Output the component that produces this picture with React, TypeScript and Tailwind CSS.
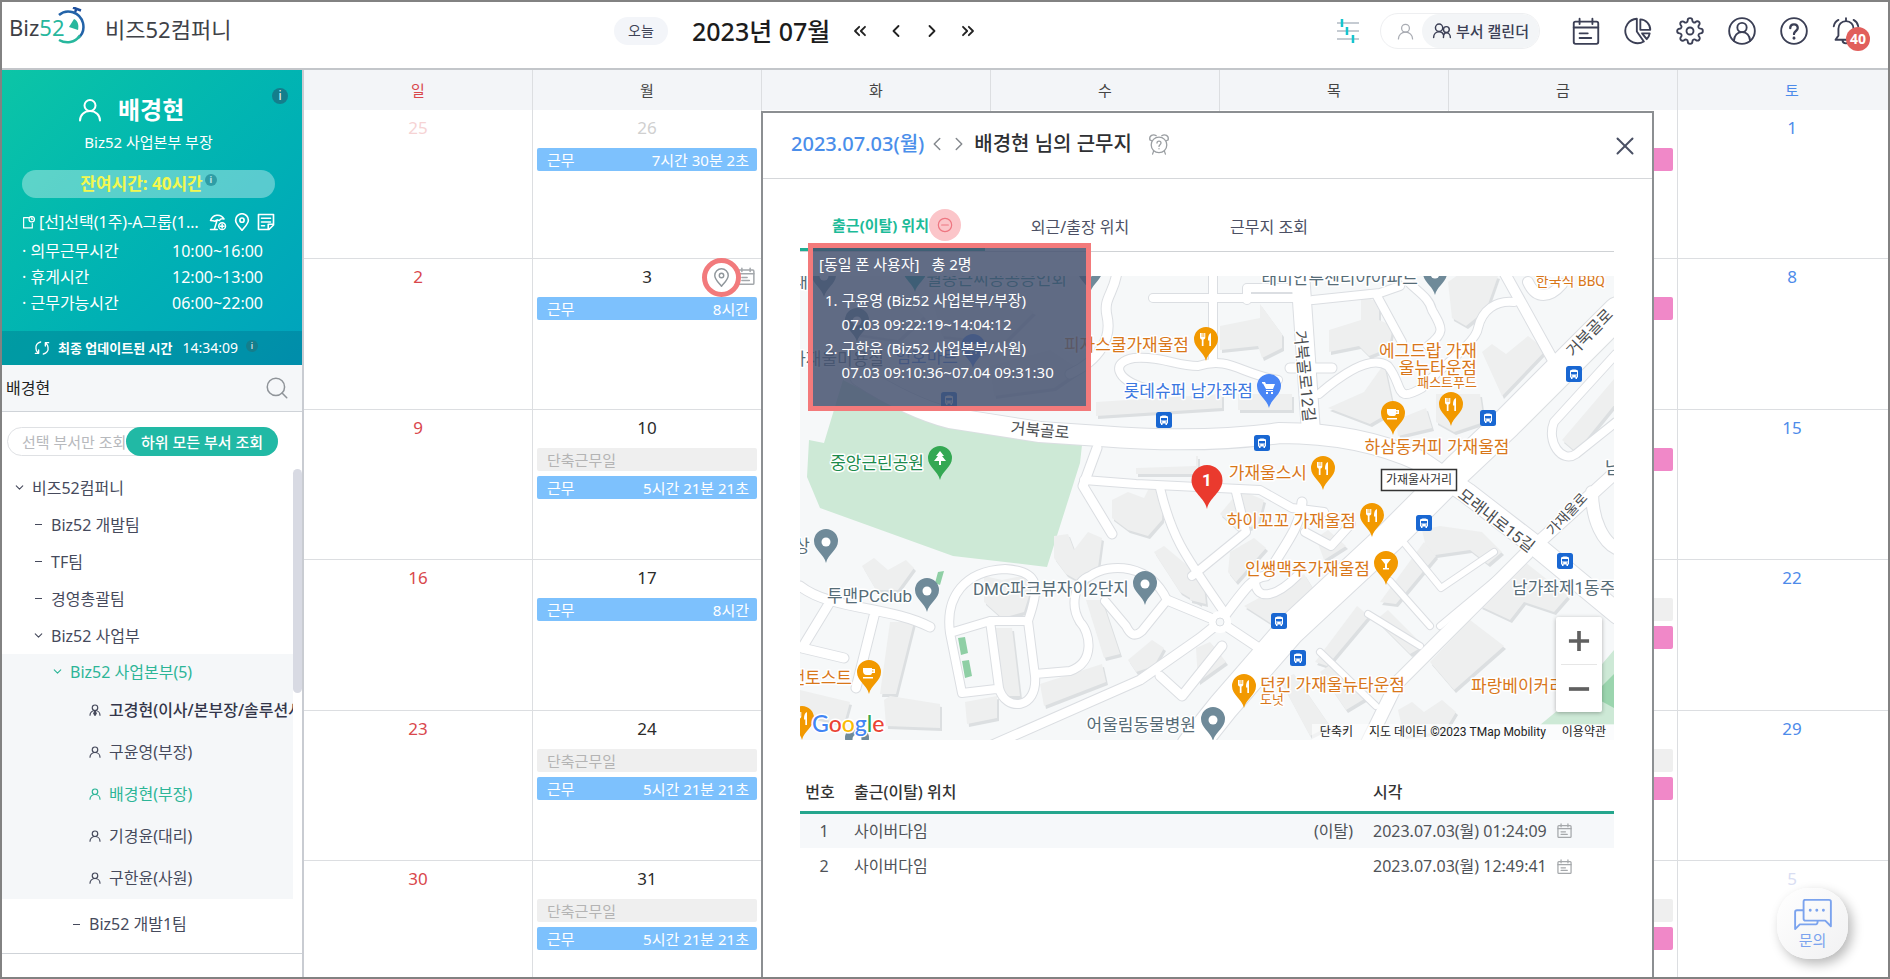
import { useState, type ReactNode } from "react";
import { FiSettings } from "react-icons/fi";
import { ChevronDown, ChevronLeft, ChevronRight, ChevronsLeft, ChevronsRight, Search, X } from "lucide-react";

type CalEvent = { label: string; value?: string; tone: "blue" | "gray" | "pink" };
type Day = { date?: number; faded?: boolean; events?: CalEvent[]; icons?: boolean };

const DAYS = ["일", "월", "화", "수", "목", "금", "토"];

const short: CalEvent = { label: "단축근무일", tone: "gray" };
const blank: CalEvent = { label: "", tone: "gray" };
const pink: CalEvent = { label: "", tone: "pink" };
const work = (value: string): CalEvent => ({ label: "근무", value, tone: "blue" });

function week(sun: Day, mon: Day, fri: Day, sat: Day): Day[] {
  return [sun, mon, {}, {}, {}, fri, sat];
}

const WEEKS: Day[][] = [
  week({ date: 25, faded: true }, { date: 26, faded: true, events: [work("7시간 30분 2초")] }, { events: [pink] }, { date: 1 }),
  week({ date: 2 }, { date: 3, icons: true, events: [work("8시간")] }, { events: [pink] }, { date: 8 }),
  week({ date: 9 }, { date: 10, events: [short, work("5시간 21분 21초")] }, { events: [pink] }, { date: 15 }),
  week({ date: 16 }, { date: 17, events: [work("8시간")] }, { events: [blank, pink] }, { date: 22 }),
  week({ date: 23 }, { date: 24, events: [short, work("5시간 21분 21초")] }, { events: [blank, pink] }, { date: 29 }),
  week({ date: 30 }, { date: 31, events: [short, work("5시간 21분 21초")] }, { events: [blank, pink] }, { date: 5, faded: true }),
];

const TONES = {
  blue: "bg-[#7dc1fd] text-white",
  gray: "bg-[#efefef] text-[#b4b4b4]",
  pink: "bg-[#f088c8] text-white",
};

function Icon({ className, children, box = 24, width = 1.6 }: { className: string; children: ReactNode; box?: number; width?: number }) {
  return (
    <svg viewBox={`0 0 ${box} ${box}`} className={className} fill="none" stroke="currentColor" strokeWidth={width} strokeLinecap="round" strokeLinejoin="round" aria-hidden="true">
      {children}
    </svg>
  );
}

function Person({ className, width = 2, lead = false }: { className: string; width?: number; lead?: boolean }) {
  return (
    <Icon className={className} width={width}>
      <circle cx="12" cy="7.5" r="5.5" />
      <path d="M2 22.500c0-5.500 4.300-9.500 10-9.500s10 4 10 9.500" />
      {lead ? <path d="M12 13l-2.500 6 2.500 4 2.500-4z" fill="currentColor" /> : null}
    </Icon>
  );
}

function CalendarIcon({ className, width = 1.8 }: { className: string; width?: number }) {
  return (
    <Icon className={className} width={width}>
      <rect x="1.500" y="4" width="21" height="19" rx="1.500" />
      <path d="M1.500 9h21M6.500 1.500V6M17.500 1.500V6M6.500 14h7M6.500 18h10" />
    </Icon>
  );
}

function PinIcon({ className, width = 1.8 }: { className: string; width?: number }) {
  return (
    <Icon className={className} width={width}>
      <path d="M12 23C8 18 3.500 14.500 3.500 9.500a8.500 8.500 0 0 1 17 0C20.500 14.500 16 18 12 23z" />
      <circle cx="12" cy="9.500" r="2.800" />
    </Icon>
  );
}

function Info({ className }: { className: string }) {
  return (
    <span className={`inline-flex shrink-0 items-center justify-center rounded-full bg-[#147e8c] text-white ${className}`}>i</span>
  );
}

function Logo() {
  return (
    <a href="#" aria-label="Biz52" className="relative flex h-10 w-[76px] items-center">
      <span className="text-[22px] leading-6 text-[#3d3f45]">
        Biz<span className="text-[#27b79d]">52</span>
      </span>
      <svg viewBox="0 0 30 40" className="absolute top-0 right-0 h-10 w-[30px]" fill="none" aria-hidden="true">
        <path d="M4 8C12 1 25 5 28 16c1.500 7-1 12-5 15" stroke="#2363a8" strokeWidth="2.500" />
        <path d="M25 28.500C20 36 11 37 4 33" stroke="#27b79d" strokeWidth="2.500" />
        <path d="M20 5l2-4M18 .500l8 3" stroke="#1d4f9c" strokeWidth="2.500" />
        <path d="M19 12c4 2 5 6 4 11l-9-3z" fill="#27b79d" />
      </svg>
    </a>
  );
}

function Header() {
  const iconBtn = "flex items-center justify-center text-[#3b3f55]";
  return (
    <header className="flex h-[68px] shrink-0 border-b-2 border-[#c3c6ca] pb-2">
      <div className="flex w-[612px] shrink-0 items-center pb-2 pl-[7px]">
        <Logo />
        <span className="mt-1 ml-5 text-[22px] leading-8 text-[#3f4248]">비즈52컴퍼니</span>
      </div>
      <div className="flex items-center">
        <button className="h-7 w-[54px] rounded-full bg-[#f3f5f9] text-[14px] leading-5 text-[#3f4356]">오늘</button>
        <h1 className="ml-6 text-[25px] leading-8 font-medium text-[#1c1c1c]">2023년 07월</h1>
        <div className="ml-5 flex items-center gap-4 text-[#222]">
          <button aria-label="이전 해"><ChevronsLeft size={20} strokeWidth={2.2} /></button>
          <button aria-label="이전 달"><ChevronLeft size={20} strokeWidth={2.2} /></button>
          <button aria-label="다음 달"><ChevronRight size={20} strokeWidth={2.2} /></button>
          <button aria-label="다음 해"><ChevronsRight size={20} strokeWidth={2.2} /></button>
        </div>
      </div>
      <div className="ml-auto flex items-center pr-7">
        <button aria-label="필터" className="mr-5">
          <svg viewBox="0 0 24 28" className="h-7 w-6" strokeWidth="2" fill="none" aria-hidden="true">
            <path d="M1 6h22M1 14h22M1 22h22" stroke="#c5cbd2" />
            <path d="M6 2v8M11 10v8M17 18v8" stroke="#16c4cf" strokeWidth="2.500" />
          </svg>
        </button>
        <div className="mr-8 flex h-9 w-40 items-center rounded-full border border-[#eeeff1]">
          <button aria-label="내 캘린더" className="flex w-[41px] justify-center pl-2 text-[#a9acb3]">
            <Person className="size-[17px]" width={1.8} />
          </button>
          <button className="flex h-full flex-1 items-center justify-center gap-1 rounded-full bg-[#f3f5f7] text-[15px] leading-5 font-medium text-[#3b3f55]">
            <svg viewBox="0 0 26 22" className="h-4 w-5" fill="none" stroke="currentColor" strokeWidth="2" strokeLinecap="round" aria-hidden="true">
              <circle cx="9" cy="6.500" r="5" />
              <path d="M1.500 20c0-4.500 3-8 7.500-8 3 0 5 1.500 6 4" />
              <circle cx="19" cy="9" r="4" />
              <path d="M15 20c0-3.500 1-6.500 4-6.500s5.500 3 5.500 6.500" />
            </svg>
            부서 캘린더
          </button>
        </div>
        <div className="flex items-center gap-6">
          <button aria-label="일정" className={iconBtn}><CalendarIcon className="size-7" width={1.6} /></button>
          <button aria-label="통계" className={iconBtn}>
            <Icon className="size-7">
              <path d="M11 1.500a10.500 10.500 0 1 0 6 19.500L11 12.500z" />
              <path d="M14 2v9h8.500A9 9 0 0 0 14 2z" />
              <path d="M15.500 14H22c-.3 2-1.200 3.700-2.500 5z" />
            </Icon>
          </button>
          <button aria-label="설정" className={iconBtn}><FiSettings size={28} strokeWidth={1.6} /></button>
          <button aria-label="내 정보" className={iconBtn}>
            <Icon className="size-7">
              <circle cx="12" cy="12" r="11" />
              <circle cx="12" cy="9" r="4" />
              <path d="M5 20.500c.5-4.500 3-7.500 7-7.500s6.500 3 7 7.500" />
            </Icon>
          </button>
          <button aria-label="도움말" className={iconBtn}>
            <Icon className="size-7">
              <circle cx="12" cy="12" r="11" />
              <path d="M8.800 9.500c0-4.300 6.400-4.300 6.400 0 0 2.300-3.200 2.700-3.200 5" strokeWidth="2" />
              <path d="M12 18v.2" strokeWidth="2.400" />
            </Icon>
          </button>
          <button aria-label="알림 40" className="relative text-[#3b3f55]">
            <Icon className="size-7">
              <path d="M12 1v2.500M12 3.500C8 3.500 5.500 6.500 5.500 10v6L3 19.500h18L18.500 16v-6c0-3.500-2.500-6.500-6.500-6.500zM9 20c0 3.500 6 3.500 6 0M1.500 8C2 5.500 3.500 3.500 5.500 2.500M22.500 8c-.5-2.500-2-4.500-4-5.500" />
            </Icon>
            <span className="absolute top-2.5 left-3.5 flex size-6 items-center justify-center rounded-full bg-[#e15f5c] text-[14px] leading-4 font-bold text-white">40</span>
          </button>
        </div>
      </div>
    </header>
  );
}

const HOURS = [
  ["의무근무시간", "10:00~16:00"],
  ["휴게시간", "12:00~13:00"],
  ["근무가능시간", "06:00~22:00"],
];

function Profile() {
  return (
    <section className="relative bg-linear-to-br from-[#0cc5a6] to-[#00a2bd] text-white">
      <Info className="absolute top-[18px] right-[14px] size-4 text-[12px] leading-4" />
      <div className="flex h-[261px] flex-col pt-6 pr-[27px] pl-5">
        <div className="flex items-center gap-4 pl-14">
          <Person className="size-6" width={2} />
          <strong className="text-[24px] leading-8 font-bold">배경현</strong>
        </div>
        <p className="mt-1 text-center text-[15px] leading-6">Biz52 사업본부 부장</p>
        <div className="mt-4 flex h-7 shrink-0 items-center justify-center rounded-full bg-white/35 text-[17px] leading-6 font-bold text-[#f3f84e]">
          잔여시간: 40시간
          <Info className="mb-2 ml-0.5 size-3 text-[9px] leading-3 opacity-60" />
        </div>
        <div className="mt-3 flex items-center">
          <Icon className="size-[13px] shrink-0" width={2.2}>
            <path d="M12 3H3v19h16v-8" />
            <circle cx="18" cy="6" r="5" />
            <path d="M18 3.500V6h2" />
          </Icon>
          <span className="ml-1 min-w-0 flex-1 text-[16px] leading-6 whitespace-nowrap">[선]선택(1주)-A그룹(1…</span>
          <Icon className="size-[18px] shrink-0" width={2}>
            <path d="M2 10C5 2 15 0 20 8c-3-1-5 0-6 2-2-1-4-1-6 1-2-1-4-1-6-1zM11 9L7 22H2h9" />
            <circle cx="17.500" cy="17.500" r="4.500" />
            <path d="M17.500 15v5M15 17.500h5" />
          </Icon>
          <PinIcon className="ml-1.5 size-[18px] shrink-0" width={2.2} />
          <Icon className="ml-1.5 size-[18px] shrink-0" width={2.2}>
            <path d="M2 2h20v14l-6 6H2zM22 15h-7v7M6 7h12M6 12h12M6 17h4" />
          </Icon>
        </div>
        <dl className="mt-1 text-[16px]">
          {HOURS.map(([label, value]) => (
            <div key={label} className="flex h-[26px] items-center justify-between pr-3">
              <dt className="leading-6">· {label}</dt>
              <dd className="leading-6">{value}</dd>
            </div>
          ))}
        </dl>
      </div>
      <div className="flex h-[34px] items-center bg-[#006080]/30 pl-8 text-[14px] leading-5">
        <Icon className="size-4" width={2}>
          <path d="M10 3C5 4 2 8 3 13c0 2 1 4 3 6M2 20h5v-5M14 21c5-1 8-5 7-10 0-2-1-4-3-6M22 4h-5v5" />
        </Icon>
        <strong className="ml-2 text-[13px] font-bold">최종 업데이트된 시간</strong>
        <span className="ml-2.5">14:34:09</span>
        <Info className="mb-1 ml-2 size-3 text-[9px] leading-3" />
      </div>
    </section>
  );
}

type Leaf = { name: string; open?: boolean; pad: string };

const TREE: Leaf[] = [
  { name: "비즈52컴퍼니", open: true, pad: "pl-[10px]" },
  { name: "Biz52 개발팀", pad: "pl-[29px]" },
  { name: "TF팀", pad: "pl-[29px]" },
  { name: "경영총괄팀", pad: "pl-[29px]" },
  { name: "Biz52 사업부", open: true, pad: "pl-[29px]" },
];

const MEMBERS = ["고경현(이사/본부장/솔루션사업)", "구윤영(부장)", "배경현(부장)", "기경윤(대리)", "구한윤(사원)"];

function TreeRow({ leaf, className }: { leaf: Leaf; className: string }) {
  return (
    <li className={`flex items-center gap-1.5 ${leaf.pad} ${className}`}>
      <span className="flex w-[14px] shrink-0 justify-center">
        {leaf.open ? <ChevronDown size={13} strokeWidth={2} /> : <span className="h-px w-[7px] bg-current" />}
      </span>
      <button className="text-[16px] leading-6">{leaf.name}</button>
    </li>
  );
}

function Sidebar() {
  const [query, setQuery] = useState("배경현");
  return (
    <aside className="flex w-[302px] shrink-0 flex-col overflow-hidden border-r-2 border-[#c9ccd2]">
      <Profile />
      <div className="flex h-[47px] shrink-0 items-center border-b border-[#cfd3d8] bg-[#f5f7f9] pr-3 pl-1">
        <input
          aria-label="이름 검색"
          value={query}
          onChange={(e) => setQuery(e.target.value)}
          className="min-w-0 flex-1 bg-transparent text-[16px] leading-6 text-[#222] outline-none"
        />
        <button aria-label="검색" className="text-[#8f9499]"><Search size={26} strokeWidth={1.4} /></button>
      </div>
      <div className="mt-[15px] ml-[5px] flex h-[29px] w-[271px] shrink-0 rounded-full border border-[#dfe1e4]">
        <button className="w-[118px] pl-3.5 text-left text-[15px] leading-5 whitespace-nowrap text-[#b7b9bd]">선택 부서만 조회</button>
        <button className="-my-px -mr-px flex-1 rounded-full bg-[#21b9a5] text-[15px] leading-5 font-medium text-white">하위 모든 부서 조회</button>
      </div>
      <div className="mt-[13px] flex border-b border-[#cfd3d8] pb-1">
        <ul className="min-w-0 flex-1 text-[#464a5c]">
          {TREE.map((leaf) => (
            <TreeRow key={leaf.name} leaf={leaf} className="h-[37px]" />
          ))}
          <li className="bg-[#f5f7f9]">
            <ul>
              <TreeRow leaf={{ name: "Biz52 사업본부(5)", open: true, pad: "pl-12" }} className="h-[35px] text-[#2cb597]" />
              {MEMBERS.map((m, i) => (
                <li key={m} className={`flex h-[42px] items-center gap-2 overflow-hidden pl-[87px] ${i === 2 ? "text-[#2cb597]" : ""}`}>
                  <Person className="size-3 shrink-0" width={2.4} lead={i === 0} />
                  <button className={`text-[16px] leading-6 whitespace-nowrap ${i === 0 ? "font-medium text-[#33364a]" : ""}`}>{m}</button>
                </li>
              ))}
            </ul>
          </li>
          <TreeRow leaf={{ name: "Biz52 개발1팀", pad: "pl-[67px]" }} className="h-[50px]" />
        </ul>
        <div className="h-[224px] w-[9px] rounded-full bg-[#d8dae3]" />
      </div>
    </aside>
  );
}

function DayCell({ day, col }: { day: Day; col: number }) {
  const color =
    col === 0
      ? day.faded ? "text-[#f6d3d4]" : "text-[#d9474c]"
      : col === 6
        ? day.faded ? "text-[#d9def3]" : "text-[#4d8bea]"
        : day.faded ? "text-[#d0d0d0]" : "text-[#2b2b2b]";
  return (
    <div className="relative flex flex-col gap-[5px] border-r border-b border-[#dcdee1] pr-1 pl-1">
      <div className={`h-[33px] pt-1.5 text-center text-[17px] leading-6 ${color}`}>{day.date}</div>
      {day.events?.map((ev, i) => (
        <div key={i} className={`flex h-[23px] items-center justify-between rounded-xs pr-2 pl-2.5 text-[15px] leading-5 ${TONES[ev.tone]}`}>
          <span>{ev.label}</span>
          <span>{ev.value}</span>
        </div>
      ))}
      {day.icons ? (
        <>
          <button aria-label="일정 보기" className="absolute top-2 right-1.5 text-[#a3a7ab]"><CalendarIcon className="size-[18px]" width={2} /></button>
          <button aria-label="근무지 보기" className="absolute -top-px right-5 flex size-[39px] items-center justify-center rounded-full border-[5px] border-[#f27a7c] text-[#8f969b]">
            <PinIcon className="size-[19px]" width={1.8} />
          </button>
        </>
      ) : null}
    </div>
  );
}

function Calendar() {
  return (
    <div className="-mr-[19px]">
      <div className="grid h-10 grid-cols-7 bg-[#f3f5f8]">
        {DAYS.map((d, i) => (
          <div key={d} className={`flex items-center justify-center border-r border-[#dcdee1] text-[15px] leading-6 ${i === 0 ? "text-[#d9474c]" : i === 6 ? "text-[#4d8bea]" : "text-[#444]"}`}>
            {d}
          </div>
        ))}
      </div>
      <div className="grid grid-cols-7 grid-rows-[149px_151px_150px_151px_150px_150px]">
        {WEEKS.map((w, r) => w.map((day, c) => <DayCell key={`${r}-${c}`} day={day} col={c} />))}
      </div>
    </div>
  );
}

// [path, width]
const ROADS: [string, number][] = [
  ["M317 -4C314 18 303 22 307 40 312 62 300 84 270 98", 9],
  ["M353 22H493M413 -4V84M513 24L580 17 600 10M447 24V12h46", 8],
  ["M345 112C316 104 310 86 334 82C362 80 376 90 398 90C430 80 440 98 478 104", 8],
  ["M577 20L602 66M600 -4C612 14 628 18 632 34C642 52 646 56 628 70", 8],
  ["M519 118C540 100 570 78 588 90C604 110 594 128 622 112C634 96 676 68 678 52 682 34 696 24 714 26", 8],
  ["M703 -6L754 86M728 6c8 18 22 16 34 2", 10],
  ["M490 92h42", 9],
  ["M816 78L754 146C746 166 762 188 776 178L816 146", 8],
  ["M297 172L283 210 312 258", 9],
  ["M284 204L336 208 460 214 492 232 524 236", 8],
  ["M360 212C372 262 384 278 424 336M392 300L446 256 436 216", 8],
  ["M0 310C30 334 90 330 130 351M30 326L2 372 44 382M75 336L56 412", 9],
  ["M150 357C145 320 165 295 205 293C240 295 240 310 228 345H190L150 357 162 417 196 413M190 345L199 412C205 436 238 434 235 400L228 345M235 398L270 395C296 386 290 356 280 346C270 330 274 306 290 300 310 286 350 288 367 324L342 355C334 362 330 358 326 350L305 325", 8],
  ["M367 324L420 346M190 470L340 404 400 362 420 346 462 374M420 346C440 320 452 300 466 300 490 262 500 250 502 226M360 400l22 20 40-50", 9],
  ["M455 306c2 20 22 14 42-6M505 256l26 14 20-22", 8],
  ["M605 268L641 312 694 276M590 305L630 350M568 338L620 370M520 376L576 430M640 350L700 300", 6],
  ["M727 277L640 364 597 407 566 470", 13],
  ["M727 277L816 196M792 216c0 30 12 50 24 56", 12],
  ["M500 -4L511 156", 18],
  ["M60 100Q110 132 150 142L240 156 300 160Q400 168 480 157Q560 157 620 185L667 217 737 271 818 338", 20],
  ["M818 36L707 147 657 194 590 261 490 354 423 431 392 470", 30],
];

const BUILDINGS = [
  "M336 192l60-2v-10h-60zM336 180h62v18h-62z",
  "M296 140l126-8v-14l-126 8zM438 118h54v16h-54z",
  "M420 50l40-8V28l22 30v14l-20 10-4-12-38 4z",
  "M529 54l32-10V20l18 6v18l14 6-4 22-20 8-10-10-30 6z",
  "M648 6l20-14 30 8-12 34-20 16-14-8z",
  "M528 132l36-16 20-28 10 46-24 14zM596 144l30-12 6 20-34 8z",
  "M636 118h44l4 28-30 10-18-10z",
  "M682 76l10-8 14 10 22-18 18 14-44 46z",
  "M762 164l58-68v26l-44 54z",
  "M312 224l16-8 16 6 8-16 12 4-2 34-14 16-20-6-16-12z",
  "M254 260l14-2 6 16 14-18 14 6-4 30-14 16-18-10-12-16z",
  "M354 276l10-6 36 30v28l-20-12z",
  "M62 290l12-8 14 12 18-10 8 8-16 22h-22z",
  "M90 346h24l-18 72h-16z",
  "M192 352h20l8 68h-22z",
  "M286 324h16l18 54-16 4z",
  "M184 300l18 4 20-4 10 10-8 26-22 6-18-16z",
  "M328 384l24-20 12 8-10 18-18 6z",
  "M240 408l62-20 4 18-62 24z",
  "M165 426l32-6v22l-30 6z",
  "M84 424l6-4 50 8v24l-54-2z",
  "M0 414l50 12-6 22-44-10z",
  "M390 300l14 10 2 18-16-4z",
  "M420 238l20-24 24 10-6 24-18 8z",
  "M430 276l24-14 12 10-30 34-8-10z",
  "M444 330l60-32 10 16-42 34z",
  "M516 262l12-8 18 16-22 14z",
  "M622 254l18-4 42 6 20 20-14 12-18-14-42 6z",
  "M515 386l42-56 12 10-42 50z",
  "M580 326l44-60 12 14-40 48z",
  "M576 344l12-10 36 36-14 8z",
  "M520 396l14-10 32 36-20 12z",
  "M630 386l40-42 34 26-50 44z",
  "M680 330l40-48 48 38-14 16-30-10-14 18z",
  "M598 434l14-8 12 10 18-12 14 12-12 20-40 4z",
  "M396 372l14-6 16 20-28 20z",
  "M480 404l14-6 36 52-20 10z",
  "M60 30l44-10 20 20-26 24-40-6z",
  "M134 30l60-14 40 20-30 30-62-6z",
  "M190 90l60-16 30 20-26 18-60 8z",
];

const PINS: [number, number, string, string][] = [
  [24, 21, "#6f8a99", "dot"], [57, 66, "#6f8a99", "dot"], [115, 16, "#17a39a", "dot"], [290, 17, "#6f8a99", "dot"],
  [173, 92, "#4a86f5", "cart"], [140, 204, "#34a853", "tree"], [26, 287, "#6f8a99", "dot"], [127, 336, "#6f8a99", "dot"],
  [345, 329, "#6f8a99", "dot"], [413, 465, "#6f8a99", "dot"], [635, 19, "#6f8a99", "dot"], [57, 484, "#6f8a99", "dot"],
  [69, 418, "#f29900", "cup"], [2, 464, "#f29900", "fork"], [406, 85, "#f29900", "fork"], [469, 132, "#4a86f5", "cart"],
  [651, 150, "#f29900", "fork"], [593, 159, "#f29900", "cup"], [523, 214, "#f29900", "fork"], [572, 261, "#f29900", "fork"],
  [586, 309, "#f29900", "glass"], [444, 432, "#f29900", "fork"],
];

const BUSES = [[149, 124], [364, 144], [462, 167], [774, 98], [688, 142], [624, 247], [765, 285], [479, 345], [498, 382]];

function Glyph({ kind }: { kind: string }) {
  switch (kind) {
    case "tree":
      return <path d="M0-8l4 5H2l4 5H1v4h-2V2h-5l4-5h-2z" fill="#fff" />;
    case "cup":
      return <path d="M-6-5h9v1h3v4H3c-.5 2-1.500 2-3 2h-2c-3 0-4-2-4-4zM3-2.500v1h1.500v-1zM-6 4H4v1.500H-6z" fill="#fff" />;
    case "cart":
      return <path d="M-7-5h3l1 2h9l-2 5h-7l-3-5.500h-1zM-3 3h7v1h-7zM-3 5h2v2h-2zM2 5h2v2H2z" fill="#fff" />;
    case "glass":
      return <path d="M-5-5H5L1 0v4h2v1.500h-6V4h2V0z" fill="#fff" />;
    case "fork":
      return <path d="M-6-7v4.500c0 1.500 1.300 2 1.800 2V6h1.700V-.500c.5 0 1.800-.5 1.800-2V-7h-1.100v4h-.7v-4h-1.100v4h-.7v-4zM5-7C2.500-6 2-3.500 2 .500h1.300V6H5V-7z" fill="#fff" />;
    default:
      return <circle r="4.500" fill="#fff" />;
  }
}

const ORANGE = "#d8771a";
const SLATE = "#566c77";
const DARK = "#4a4d50";

type Label = { x: number; y: number; t: string; c: string; size?: number; anchor?: "start" | "middle" | "end"; rotate?: number };

const LABELS: Label[] = [
  { x: 267, y: 9, t: "월종근씨공공증인회", c: "#17857e", anchor: "end" },
  { x: 0, y: 12, t: "재", c: SLATE, anchor: "middle" },
  { x: 84, y: 89, t: "가재울미용실", c: SLATE, anchor: "end" },
  { x: 158, y: 87, t: "엄호마트", c: "#3c78e0", anchor: "end" },
  { x: 124, y: 193, t: "중앙근린공원", c: "#1b8a4b", anchor: "end" },
  { x: 10, y: 276, t: "상", c: SLATE, anchor: "end" },
  { x: 112, y: 326, t: "투맨PCclub", c: SLATE, anchor: "end" },
  { x: 329, y: 319, t: "DMC파크뷰자이2단지", c: SLATE, anchor: "end" },
  { x: 52, y: 408, t: "맨토스트", c: ORANGE, anchor: "end" },
  { x: 396, y: 455, t: "어울림동물병원", c: SLATE, anchor: "end" },
  { x: 389, y: 75, t: "피자스쿨가재울점", c: ORANGE, anchor: "end" },
  { x: 453, y: 121, t: "롯데슈퍼 남가좌점", c: "#3c78e0", anchor: "end" },
  { x: 507, y: 203, t: "가재울스시", c: ORANGE, anchor: "end" },
  { x: 556, y: 251, t: "하이꼬꼬 가재울점", c: ORANGE, anchor: "end" },
  { x: 570, y: 299, t: "인쌩맥주가재울점", c: ORANGE, anchor: "end" },
  { x: 460, y: 415, t: "던킨 가재울뉴타운점", c: ORANGE },
  { x: 460, y: 428, t: "도넛", c: ORANGE, size: 13 },
  { x: 671, y: 416, t: "파랑베이커리", c: ORANGE },
  { x: 712, y: 318, t: "남가좌제1동주", c: SLATE },
  { x: 677, y: 81, t: "에그드랍 가재", c: ORANGE, anchor: "end" },
  { x: 677, y: 98, t: "울뉴타운점", c: ORANGE, anchor: "end" },
  { x: 677, y: 111, t: "패스트푸드", c: ORANGE, size: 13, anchor: "end" },
  { x: 637, y: 177, t: "하삼동커피 가재울점", c: ORANGE, anchor: "middle" },
  { x: 618, y: 8, t: "래미안루센티아아파트", c: SLATE, anchor: "end" },
  { x: 805, y: 10, t: "한국식 BBQ", c: ORANGE, size: 14, anchor: "end" },
  { x: 805, y: 198, t: "남", c: SLATE },
  { x: 240, y: 160, t: "거북골로", c: DARK, anchor: "middle", rotate: 5 },
  { x: 790, y: 62, t: "거북골로", c: DARK, anchor: "middle", rotate: -46 },
  { x: 504, y: 105, t: "거북골로12길", c: DARK, anchor: "middle", rotate: 84 },
  { x: 696, y: 250, t: "모래내로15길", c: DARK, anchor: "middle", rotate: 38 },
  { x: 767, y: 243, t: "가재울로", c: DARK, size: 14, anchor: "middle", rotate: -47 },
];

const GOOGLE = [["G", "#4285f4"], ["o", "#ea4335"], ["o", "#fbbc05"], ["g", "#4285f4"], ["l", "#34a853"], ["e", "#ea4335"]];

function MapView() {
  return (
    <div className="relative mt-6 h-[464px] overflow-hidden font-['Roboto','Noto_Sans_CJK_KR',sans-serif]">
      <svg viewBox="0 0 814 464" preserveAspectRatio="xMidYMid slice" className="h-full w-full" role="img" aria-label="지도">
        <rect width="814" height="464" fill="#f6f8f9" />
        <path d="M43 104L102 134 120 141 150 152 183 157 282 169 280 187 247 291 153 280 20 232 7 201 9 164 24 167z" fill="#cde9d6" />
        <path d="M740 449L775 420 814 374V449z" fill="#cde9d6" />
        <path d="M792 420l22-22v34z" fill="#9bd5ae" />
        {BUILDINGS.map((d) => (
          <g key={d}>
            <path d={d} fill="#dcdfe1" transform="translate(2 3)" />
            <path d={d} fill="#eeefef" />
          </g>
        ))}
        <g fill="none" strokeLinejoin="round" strokeLinecap="round">
          {ROADS.map(([d, w]) => (
            <path key={d} d={d} stroke="#dbdee2" strokeWidth={w + 2} />
          ))}
          {ROADS.map(([d, w]) => (
            <path key={d} d={d} stroke="#fff" strokeWidth={w} />
          ))}
        </g>
        <circle cx="420" cy="346" r="11" fill="#fff" />
        <circle cx="420" cy="346" r="4" fill="#f6f8f9" stroke="#dbdee2" />
        <path d="M158 362l7-1 3 16-7 2zM162 385l7-1 3 16-7 2zM138 296l6-1-4 14-5-2z" fill="#8fcfa5" />
        {PINS.map(([x, y, fill, kind]) => (
          <g key={`${x}-${y}`} transform={`translate(${x} ${y})`}>
            <path d="M0 0C-2-9-12-13-12-22a12 12 0 0 1 24 0C12-13 2-9 0 0z" fill={fill} />
            <g transform="translate(0 -21)"><Glyph kind={kind} /></g>
          </g>
        ))}
        {BUSES.map(([x, y]) => (
          <g key={`${x}-${y}`} transform={`translate(${x} ${y})`}>
            <rect x="-8" y="-8" width="16" height="16" rx="2.500" fill="#1967d2" />
            <path d="M-4-3c0-2 8-2 8 0v6.500H3V5H1.500V3.500h-3V5H-3V3.500h-1z" fill="#fff" />
            <path d="M-3-2h6v2.500h-6zM-3 1.500h1.300v1H-3zM1.700 1.500H3v1H1.700z" fill="#1967d2" />
          </g>
        ))}
        <g stroke="#fff" strokeWidth="3" strokeLinejoin="round" style={{ paintOrder: "stroke" }}>
          {LABELS.map((l) => (
            <text key={`${l.t}${l.x}`} x={l.x} y={l.y} fill={l.c} fontSize={l.size ?? (l.rotate ? 16 : 17)} textAnchor={l.anchor ?? "start"} transform={l.rotate ? `rotate(${l.rotate} ${l.x} ${l.y - 5})` : undefined}>
              {l.t}
            </text>
          ))}
          <text x="12" y="456" fontSize="23" className="font-['Lato',sans-serif] font-medium">
            {GOOGLE.map(([ch, c], i) => (
              <tspan key={i} fill={c}>{ch}</tspan>
            ))}
          </text>
        </g>
        <rect x="581.500" y="193.500" width="75" height="21" fill="#fff" stroke="#333" strokeWidth="1.500" />
        <text x="619" y="208" fontSize="12" textAnchor="middle" fill="#333">가재울사거리</text>
        <path d="M407 233C405 222 391.500 216 391.500 204.500a15.500 15.500 0 0 1 31 0C422.500 216 409 222 407 233z" fill="#ea3a2e" />
        <text x="407" y="210" fontSize="17" textAnchor="middle" className="font-bold" fill="#fff">1</text>
      </svg>
      <div className="absolute right-3 bottom-7 flex w-[46px] flex-col items-center rounded-xs bg-white shadow-[0_1px_4px_rgba(0,0,0,0.3)]">
        <button aria-label="확대" className="flex h-[47px] w-full items-center justify-center text-[#606060]">
          <Icon className="size-[22px]" width={4}><path d="M12 1v22M1 12h22" strokeLinecap="butt" /></Icon>
        </button>
        <span className="h-px w-9 bg-[#e6e6e6]" />
        <button aria-label="축소" className="flex h-[47px] w-full items-center justify-center text-[#606060]">
          <Icon className="size-[22px]" width={4}><path d="M1 12h22" strokeLinecap="butt" /></Icon>
        </button>
      </div>
      <div className="absolute right-0 bottom-0 flex gap-4 bg-white/60 px-2 text-[12px] leading-4 text-[#222]">
        <button>단축키</button>
        <span>지도 데이터 ©2023 TMap Mobility</span>
        <a href="#">이용약관</a>
      </div>
    </div>
  );
}

const RECORDS = [
  { no: 1, place: "사이버다임", note: "(이탈)", time: "2023.07.03(월) 01:24:09" },
  { no: 2, place: "사이버다임", note: "", time: "2023.07.03(월) 12:49:41" },
];

function Records() {
  return (
    <table className="mt-[34px] w-full table-fixed text-left text-[16px] leading-6 text-[#505358]">
      <colgroup>
        <col className="w-12" />
        <col />
        <col className="w-16" />
        <col className="w-[249px]" />
      </colgroup>
      <thead className="border-b-[3px] border-[#25a68d]">
        <tr className="h-[38px] text-[#333]">
          <th className="pr-2 text-center font-medium whitespace-nowrap">번호</th>
          <th className="pl-1.5 font-medium">출근(이탈) 위치</th>
          <th />
          <th className="pl-2 font-medium">시각</th>
        </tr>
      </thead>
      <tbody>
        {RECORDS.map((r) => (
          <tr key={r.no} className="h-9 odd:bg-[#f6f8fa]">
            <td className="text-center">{r.no}</td>
            <td className="pl-1.5">{r.place}</td>
            <td className="pr-3 text-right">{r.note}</td>
            <td className="pl-2">
              <span className="flex items-center gap-2.5">
                {r.time}
                <CalendarIcon className="size-[15px] text-[#a5a8ab]" width={2} />
              </span>
            </td>
          </tr>
        ))}
      </tbody>
    </table>
  );
}

const SHARED = [
  ["1.", "구윤영 (Biz52 사업본부/부장)", "07.03 09:22:19~14:04:12"],
  ["2.", "구한윤 (Biz52 사업본부/사원)", "07.03 09:10:36~07.04 09:31:30"],
];

function SharedPhoneTip() {
  return (
    <div role="tooltip" className="absolute top-[37px] left-2 z-10 h-[168px] w-[283px] border-[5px] border-[#f37a7b] bg-[#455270]/85 px-1.5 pt-1 text-[15px] leading-6 text-white">
      <p className="flex gap-3"><span>[동일 폰 사용자]</span><span>총 2명</span></p>
      <ol className="mt-3 pl-1.5">
        {SHARED.map(([no, who, when]) => (
          <li key={no} className="flex gap-1 whitespace-nowrap">
            <span>{no}</span>
            <span>{who}<br />{when}</span>
          </li>
        ))}
      </ol>
    </div>
  );
}

function WorkplaceModal() {
  return (
    <section role="dialog" aria-label="배경현 님의 근무지" className="absolute top-[41px] right-[234px] bottom-0 left-[457px] border-2 border-b-0 border-[#8c8f92] bg-white">
      <div className="flex h-[66px] items-center border-b border-[#d5d7da] pr-3 pb-1 pl-7 text-[20px] leading-8">
        <span className="mr-0.5 font-medium text-[#4a8eea]">2023.07.03(월)</span>
        <button aria-label="이전 날" className="text-[#85898e]"><ChevronLeft size={22} strokeWidth={1.6} /></button>
        <button aria-label="다음 날" className="text-[#85898e]"><ChevronRight size={22} strokeWidth={1.6} /></button>
        <h2 className="ml-1 font-medium text-[#2e3033]">배경현 님의 근무지</h2>
        <Icon className="ml-4 size-[22px] text-[#9a9ea2]" width={1.4}>
          <circle cx="12" cy="13" r="8.500" />
          <path d="M2 7.500C1 3 5.500.500 9 3M22 7.500C23 3 18.500.5 15 3M2 7.500l2 1M22 7.500l-2 1M6 20l-1 3M18 20l1 3M9.800 11c0-3 4.400-3 4.400 0 0 1.700-2.200 2-2.200 3.700M12 17v.3" />
        </Icon>
        <button aria-label="닫기" className="mt-1 ml-auto text-[#4a5064]"><X size={30} strokeWidth={1.6} /></button>
      </div>
      <div className="pt-[27px] pr-[38px] pl-[37px]">
        <div role="tablist" className="relative flex h-[46px] border-b border-[#cfd2d5] text-[16px] leading-6 text-[#4c5064]">
          <button role="tab" aria-selected="true" className="flex w-[185px] items-center justify-center border-b-[3px] border-[#1fae93] pb-1 pl-2 font-bold text-[#1cbb98]">
            <span className="text-[15px]">출근(이탈) 위치</span>
            <span className="flex size-8 items-center justify-center rounded-full bg-[#fbc5c9] text-[#ee7681]">
              <Icon className="size-4" width={1.8}>
                <circle cx="12" cy="12" r="10" />
                <path d="M7 12h10" />
              </Icon>
            </span>
          </button>
          <button role="tab" aria-selected="false" className="w-[190px] pb-1">외근/출장 위치</button>
          <button role="tab" aria-selected="false" className="w-[188px] pb-1">근무지 조회</button>
          <SharedPhoneTip />
        </div>
        <MapView />
        <Records />
      </div>
    </section>
  );
}

function ChatButton() {
  return (
    <button className="absolute right-10 bottom-[18px] flex size-[71px] flex-col items-center justify-center rounded-[32px] bg-linear-to-br from-white to-[#f1f1f2] text-[15px] leading-5 text-[#7ba3ee] shadow-[4px_5px_12px_rgba(0,0,0,0.28)]">
      <svg viewBox="0 0 42 34" className="h-8 w-10" fill="none" stroke="currentColor" strokeWidth="2" strokeLinejoin="round" aria-hidden="true">
        <path d="M11 2h27q2 0 2 2v26l-6-6H13q-2 0-2-2V4q0-2 2-2" />
        <path d="M11 13H4q-2 0-2 2v18l5-5h17q2 0 2-4" />
        <path d="M18 13h.1M25 13h.1M32 13h.1" strokeWidth="3" strokeLinecap="round" />
      </svg>
      문의
    </button>
  );
}

export default function App() {
  return (
    <div className="flex h-screen flex-col overflow-hidden border-2 border-[#828282] bg-white font-['Noto_Sans','Noto_Sans_CJK_KR',sans-serif]">
      <Header />
      <div className="flex min-h-0 flex-1">
        <Sidebar />
        <main className="relative min-w-0 flex-1 overflow-hidden">
          <Calendar />
          <WorkplaceModal />
          <ChatButton />
        </main>
      </div>
    </div>
  );
}
